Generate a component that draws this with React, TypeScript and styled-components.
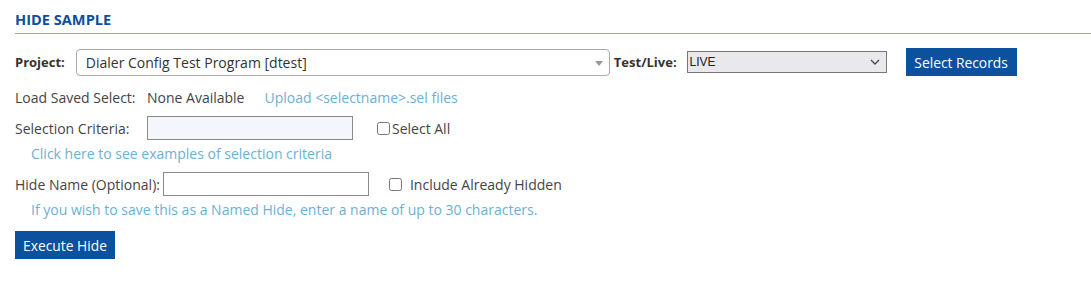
import React, { useState } from "react";
import styled, { createGlobalStyle } from "styled-components";

const GlobalStyle = createGlobalStyle`
  body {
    margin: 0;
    background: #ffffff;
    font-family: "Open Sans", "Noto Sans", sans-serif;
    color: #3a3a3a;
  }
`;

const Page = styled.div`
  padding: 10px 0 0 15px;
  font-size: 14px;
`;

const Title = styled.h2`
  margin: 0;
  padding: 0 0 5px;
  font-size: 14.6px;
  font-weight: 700;
  color: #0c4f9c;
  border-bottom: 1px solid #73b5d3;
  line-height: 18px;
`;

const Row = styled.div<{ $top: number; $height?: number }>`
  display: flex;
  align-items: center;
  margin-top: ${(p) => p.$top}px;
  height: ${(p) => p.$height ?? 24}px;
`;

const Label = styled.span<{ $bold?: boolean; $width?: number }>`
  font-weight: ${(p) => (p.$bold ? 700 : 400)};
  font-size: ${(p) => (p.$bold ? "13px" : "inherit")};
  color: ${(p) => (p.$bold ? "#333" : "#444")};
  width: ${(p) => (p.$width ? `${p.$width}px` : "auto")};
  flex: none;
  white-space: nowrap;
`;

const FakeSelect = styled.div`
  position: relative;
  box-sizing: border-box;
  width: 534px;
  height: 27px;
  margin-left: 11px;
  border: 1px solid #aaaaaa;
  border-radius: 4px;
  padding-left: 9px;
  display: flex;
  align-items: center;
  font-size: 14px;
  color: #333;
`;

const Caret = styled.span`
  position: absolute;
  right: 6px;
  top: 11px;
  width: 0;
  height: 0;
  border-left: 4px solid transparent;
  border-right: 4px solid transparent;
  border-top: 5px solid #999;
`;

const NativeSelect = styled.div`
  position: relative;
  box-sizing: border-box;
  width: 200px;
  height: 22px;
  margin-left: 10px;
  background: #e9e9ed;
  border: 1px solid #767676;
  font-family: "Liberation Sans", Arial, sans-serif;
  font-size: 12px;
  color: #222;
  display: flex;
  align-items: center;
  padding-left: 2px;
`;

const Chevron = styled.svg`
  position: absolute;
  right: 6px;
  top: 7px;
`;

const Button = styled.button<{ $width: number }>`
  box-sizing: border-box;
  width: ${(p) => p.$width}px;
  height: 28px;
  border: none;
  background: #0b519d;
  color: #fff;
  font-family: "Open Sans", "Noto Sans", sans-serif;
  font-size: 13.8px;
  padding: 0;
  cursor: pointer;
`;

const Value = styled.span`
  color: #444;
`;

const Link = styled.a<{ $indent?: number }>`
  color: #6cb1d2;
  text-decoration: none;
  margin-left: ${(p) => p.$indent ?? 0}px;
  white-space: nowrap;
  cursor: pointer;
`;

const TextInput = styled.input<{ $tint?: boolean }>`
  box-sizing: border-box;
  width: 206px;
  height: 24px;
  border: 1px solid #8a8a8a;
  background: ${(p) => (p.$tint ? "#f3f7fb" : "#ffffff")};
  margin: 0;
  outline: none;
`;

const Check = styled.label<{ $gap: number; $left: number }>`
  display: flex;
  align-items: center;
  margin-left: ${(p) => p.$left}px;
  color: #444;
  white-space: nowrap;
  input {
    margin: 0 ${(p) => p.$gap}px 0 0;
    width: 13px;
    height: 13px;
  }
`;

export default function App() {
  const [criteria, setCriteria] = useState("");
  const [hideName, setHideName] = useState("");

  return (
    <Page>
      <GlobalStyle />
      <Title>HIDE SAMPLE</Title>

      <Row $top={14} $height={28}>
        <Label $bold>Project:</Label>
        <FakeSelect>
          Dialer Config Test Program [dtest]
          <Caret />
        </FakeSelect>
        <Label $bold style={{ marginLeft: 4 }}>
          Test/Live:
        </Label>
        <NativeSelect>
          LIVE
          <Chevron width="10" height="6" viewBox="0 0 10 6">
            <path d="M1 1l4 4 4-4" fill="none" stroke="#444" strokeWidth="1.3" />
          </Chevron>
        </NativeSelect>
        <Button $width={111} style={{ marginLeft: 19 }}>
          Select Records
        </Button>
      </Row>

      <Row $top={9}>
        <Label $width={132}>Load Saved Select:</Label>
        <Value>None Available</Value>
        <Link $indent={20}>Upload &lt;selectname&gt;.sel files</Link>
      </Row>

      <Row $top={7}>
        <Label $width={132}>Selection Criteria:</Label>
        <TextInput $tint value={criteria} onChange={(e) => setCriteria(e.target.value)} />
        <Check $left={24} $gap={2}>
          <input type="checkbox" />
          Select All
        </Check>
      </Row>

      <Row $top={1}>
        <Link $indent={16}>Click here to see examples of selection criteria</Link>
      </Row>

      <Row $top={7}>
        <Label style={{ marginRight: 3 }}>Hide Name (Optional):</Label>
        <TextInput value={hideName} onChange={(e) => setHideName(e.target.value)} />
        <Check $left={20} $gap={8}>
          <input type="checkbox" />
          Include Already Hidden
        </Check>
      </Row>

      <Row $top={1}>
        <Link $indent={16}>If you wish to save this as a Named Hide, enter a name of up to 30 characters.</Link>
      </Row>

      <Row $top={10} $height={28}>
        <Button $width={100}>Execute Hide</Button>
      </Row>
    </Page>
  );
}
